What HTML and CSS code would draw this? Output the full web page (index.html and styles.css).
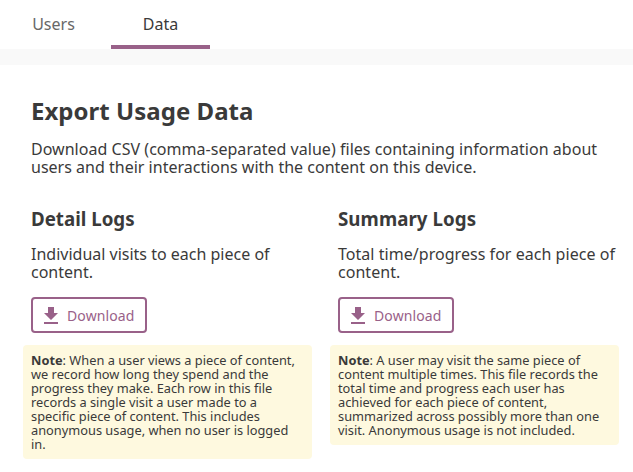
FILE: index.html
```html
<!DOCTYPE html>
<html lang="en">
<head>
<meta charset="utf-8">
<title>Export Usage Data</title>
<link rel="stylesheet" href="styles.css">
</head>
<body>
<nav class="tabs"><a class="tab">Users</a><a class="tab active">Data</a></nav>
<main class="page">
<h1>Export Usage Data</h1>
<p class="intro">Download CSV (comma-separated value) files containing information about <span class="line">users and their interactions with the content on this device.</span></p>
<div class="columns">
<section class="log">
<h2>Detail Logs</h2>
<p>Individual visits to each piece of content.</p>
<button class="download"><svg viewBox="5 3 14 17" width="14" height="17"><path d="M19 9h-4V3H9v6H5l7 7 7-7zM5 18v2h14v-2H5z"/></svg><span>Download</span></button>
<div class="note"><b>Note</b>: When a user views a piece of content, we record how long they spend and the progress they make. Each row in this file records a single visit a user made to a specific piece of content. This includes anonymous usage, when no user is logged in.</div>
</section>
<section class="log summary">
<h2>Summary Logs</h2>
<p>Total time/progress for each piece of content.</p>
<button class="download"><svg viewBox="5 3 14 17" width="14" height="17"><path d="M19 9h-4V3H9v6H5l7 7 7-7zM5 18v2h14v-2H5z"/></svg><span>Download</span></button>
<div class="note"><b>Note</b>: A user may visit the same piece of content multiple times. This file records the total time and progress each user has achieved for each piece of content, summarized across possibly more than one visit. Anonymous usage is not included.</div>
</section>
</div>
</main>
</body>
</html>
```
FILE: styles.css
```css
* { box-sizing: border-box; }
body { margin: 0; height: 472px; overflow: hidden; background: #fff; color: #3a3a3a; font: 16px/18px "Noto Sans", sans-serif; }
h1, h2, p { margin: 0; }
.tabs { display: flex; gap: 4px; height: 65px; border-bottom: 16px solid #f9f9f9; }
.tab { width: 107px; height: 49px; line-height: 48px; text-align: center; color: #686868; }
.active { width: 99px; color: #3a3a3a; border-bottom: 4px solid #996189; }
.page { padding: 29px 0 0 31px; }
h1 { font-size: 24px; line-height: 33px; letter-spacing: .03px; }
.intro { width: 580px; margin-top: 13px; letter-spacing: .03px; }
.line { letter-spacing: .01px; }
.columns { display: grid; grid-template-columns: 281px 281px; column-gap: 26px; margin-top: 30px; }
h2 { font-size: 18.72px; line-height: 26px; letter-spacing: 0; }
.summary h2 { letter-spacing: .06px; }
.log p { margin-top: 13px; }
.summary p { letter-spacing: .04px; }
.download { display: flex; align-items: center; gap: 9px; width: 116px; height: 36px; margin: 16px 0 12px; padding: 0 0 0 11px; border: 2px solid #996189; border-radius: 4px; background: #fff; color: #996189; font: 14px "Noto Sans", sans-serif; letter-spacing: .12px; }
.download svg { fill: currentColor; flex: none; }
.note { width: 289px; margin-left: -8px; padding: 8px; border-radius: 4px; background: #fef9df; font-size: 12.8px; line-height: 14px; }
```
